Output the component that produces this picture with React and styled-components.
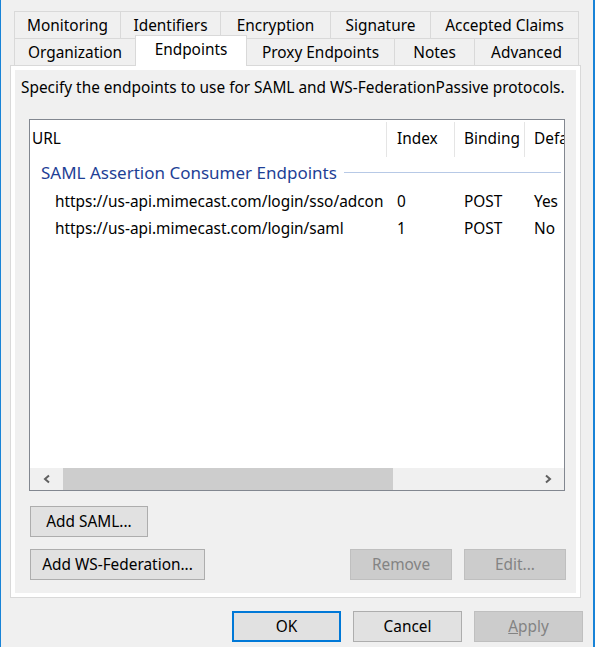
import React from 'react';
import styled, { createGlobalStyle } from 'styled-components';

const GlobalStyle = createGlobalStyle`
  body {
    margin: 0;
    font-family: "Noto Sans", "Open Sans", sans-serif;
    font-size: 15.4px;
    color: #000;
    background: #f0f0f0;
  }
  * { box-sizing: border-box; }
`

const Window = styled.div`
  width: 595px;
  height: 647px;
  background: #f0f0f0;
  border-left: 1px solid #1883d7;
  border-right: 2px solid #1883d7;
  padding: 11px 0 0 9px;
  display: flex;
  flex-direction: column;
  overflow: hidden;
`

const TabStrip = styled.div`
  margin-left: 4px;
  display: flex;
  flex-direction: column;
`

const TabRow = styled.div`
  display: flex;
  align-items: flex-end;
  height: 27px;
`

const Tab = styled.div`
  width: ${p => p.w}px;
  height: ${p => (p.active ? 31 : 27)}px;
  margin-bottom: ${p => (p.active ? -1 : 0)}px;
  margin-right: -1px;
  border: 1px solid #d9d9d9;
  border-bottom: none;
  background: ${p => (p.active ? '#fff' : '#f0f0f0')};
  position: relative;
  z-index: ${p => (p.active ? 2 : 0)};
  display: flex;
  align-items: center;
  justify-content: center;
  padding-bottom: ${p => (p.active ? 3 : 0)}px;
  white-space: nowrap;
`

const Panel = styled.div`
  width: 571px;
  height: 533px;
  border: 1px solid #d9d9d9;
  background: #fff;
  padding: 4px;
  position: relative;
  z-index: 1;
`

const Page = styled.div`
  height: 100%;
  background: #f0f0f0;
  padding: 8px 10px 0 14px;
  display: flex;
  flex-direction: column;
`

const Description = styled.div`
  margin-left: -8px;
  height: 20px;
  line-height: 20px;
  white-space: nowrap;
`

const ListBox = styled.div`
  margin-top: 21px;
  width: 536px;
  height: 372px;
  border: 1px solid #828790;
  background: #fff;
  display: flex;
  flex-direction: column;
  overflow: hidden;
`

const HeaderRow = styled.div`
  display: flex;
  height: 37px;
  flex-shrink: 0;
`

const HeaderCell = styled.div`
  width: ${p => p.w}px;
  flex-shrink: 0;
  padding-left: ${p => p.pad}px;
  display: flex;
  align-items: center;
  white-space: nowrap;
  overflow: hidden;
  position: relative;
  &::after {
    content: '';
    position: absolute;
    right: 0;
    top: 2px;
    bottom: 0;
    width: 1px;
    background: ${p => (p.last ? 'transparent' : '#e5e5e5')};
  }
`

const GroupRow = styled.div`
  height: 31px;
  flex-shrink: 0;
  display: flex;
  align-items: center;
  padding: 0 3px 0 11px;
  gap: 7px;
  font-size: 17px;
  color: #1e3f96;
  white-space: nowrap;
`

const GroupLine = styled.div`
  flex: 1;
  height: 1px;
  background: #b7c9e6;
`

const Row = styled.div`
  display: flex;
  height: 27px;
  flex-shrink: 0;
`

const Cell = styled.div`
  width: ${p => p.w}px;
  flex-shrink: 0;
  padding-left: ${p => p.pad}px;
  display: flex;
  align-items: center;
  white-space: nowrap;
  overflow: hidden;
`

const Spacer = styled.div`
  flex: 1;
`

const ScrollBar = styled.div`
  height: 22px;
  flex-shrink: 0;
  background: #f0f0f0;
  display: flex;
  align-items: stretch;
`

const ArrowButton = styled.div`
  width: 33px;
  flex-shrink: 0;
  display: flex;
  align-items: center;
  justify-content: center;
`

const Track = styled.div`
  flex: 1;
  display: flex;
`

const Thumb = styled.div`
  width: 330px;
  background: #cdcdcd;
`

const ButtonRow = styled.div`
  display: flex;
  margin-top: ${p => p.mt}px;
  padding-left: 1px;
  gap: 12px;
`

const Button = styled.div`
  width: ${p => p.w}px;
  height: 31px;
  display: flex;
  align-items: center;
  justify-content: center;
  background: ${p => (p.disabled ? '#cccccc' : '#e1e1e1')};
  border: ${p => (p.primary ? '2px solid #0078d7' : p.disabled ? '1px solid #bfbfbf' : '1px solid #adadad')};
  color: ${p => (p.disabled ? '#838383' : '#000')};
  white-space: nowrap;
  margin-left: ${p => (p.push ? 'auto' : '0')};
`

const DialogButtons = styled.div`
  display: flex;
  justify-content: flex-end;
  gap: 12px;
  margin-top: 13px;
  padding-right: 10px;
`

const Chevron = ({ dir }) => (
  <svg width="10" height="10" viewBox="0 0 10 10">
    <path
      d={dir === 'left' ? 'M7 1.5 L3 5 L7 8.5' : 'M3 1.5 L7 5 L3 8.5'}
      fill="none"
      stroke="#606060"
      strokeWidth="2"
    />
  </svg>
)

const topTabs = [
  ['Monitoring', 107],
  ['Identifiers', 101],
  ['Encryption', 111],
  ['Signature', 101],
  ['Accepted Claims', 149],
]

const bottomTabs = [
  ['Organization', 122],
  ['Endpoints', 112, true],
  ['Proxy Endpoints', 149],
  ['Notes', 81],
  ['Advanced', 105],
]

const cols = [
  { w: 357, hpad: 2, pad: 25 },
  { w: 68, hpad: 10, pad: 10 },
  { w: 70, hpad: 9, pad: 9 },
  { w: 80, hpad: 9, pad: 9 },
]

const endpoints = [
  ['https://us-api.mimecast.com/login/sso/adcon', '0', 'POST', 'Yes'],
  ['https://us-api.mimecast.com/login/saml', '1', 'POST', 'No'],
]

export default function App() {
  return (
    <>
      <GlobalStyle />
      <Window>
        <TabStrip>
          <TabRow>
            {topTabs.map(([label, w]) => (
              <Tab key={label} w={w}>{label}</Tab>
            ))}
          </TabRow>
          <TabRow>
            {bottomTabs.map(([label, w, active]) => (
              <Tab key={label} w={w} active={active}>{label}</Tab>
            ))}
          </TabRow>
        </TabStrip>
        <Panel>
          <Page>
            <Description>
              Specify the endpoints to use for SAML and WS-FederationPassive protocols.
            </Description>
            <ListBox>
              <HeaderRow>
                {['URL', 'Index', 'Binding', 'Default'].map((h, i) => (
                  <HeaderCell key={h} w={cols[i].w} pad={cols[i].hpad} last={i === 3}>
                    {h}
                  </HeaderCell>
                ))}
              </HeaderRow>
              <GroupRow>
                SAML Assertion Consumer Endpoints
                <GroupLine />
              </GroupRow>
              {endpoints.map(row => (
                <Row key={row[0]}>
                  {row.map((v, i) => (
                    <Cell key={i} w={cols[i].w} pad={cols[i].pad}>{v}</Cell>
                  ))}
                </Row>
              ))}
              <Spacer />
              <ScrollBar>
                <ArrowButton><Chevron dir="left" /></ArrowButton>
                <Track><Thumb /></Track>
                <ArrowButton><Chevron dir="right" /></ArrowButton>
              </ScrollBar>
            </ListBox>
            <ButtonRow mt={15}>
              <Button w={118}>Add SAML...</Button>
            </ButtonRow>
            <ButtonRow mt={12}>
              <Button w={175}>Add WS-Federation...</Button>
              <Button w={102} disabled push>Remove</Button>
              <Button w={102} disabled>Edit...</Button>
            </ButtonRow>
          </Page>
        </Panel>
        <DialogButtons>
          <Button w={109} primary>OK</Button>
          <Button w={109}>Cancel</Button>
          <Button w={109} disabled><span><u>A</u>pply</span></Button>
        </DialogButtons>
      </Window>
    </>
  )
}
